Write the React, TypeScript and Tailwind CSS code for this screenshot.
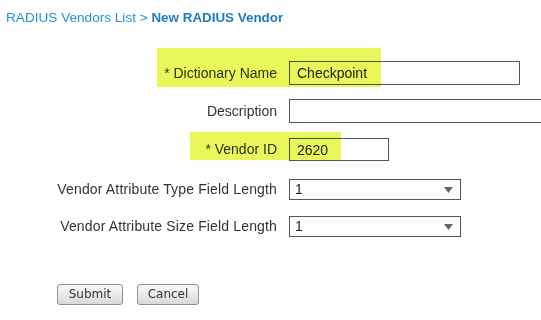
import React from "react";

const labelCls =
  "w-[277px] shrink-0 text-right text-[14px] text-[#333] pr-0";
const inputCls =
  "h-full border border-[#4b5b63] bg-white px-[7px] text-[14px] text-[#222] outline-none";

function Select() {
  return (
    <div className="relative h-[21px] w-[172px] border border-[#4b5b63] bg-white">
      <span className="absolute left-[5px] top-[1px] text-[14px] leading-[17px] text-[#222]">1</span>
      <svg
        className="absolute right-[7px] top-[7px]"
        width="9"
        height="6"
        viewBox="0 0 9 6"
      >
        <path d="M0 0 H9 L4.5 6 Z" fill="#666" />
      </svg>
    </div>
  );
}

function Button({ label, w }: { label: string; w: string }) {
  return (
    <button
      className={`${w} h-[21px] rounded-[3px] border border-[#8f8f8f] bg-gradient-to-b from-[#fbfbfb] to-[#d9d9d9] text-[12px] leading-[17px] text-[#333]`}
      style={{ fontFamily: '"DejaVu Sans", sans-serif' }}
    >
      {label}
    </button>
  );
}

export default function App() {
  return (
    <div
      className="relative h-[320px] w-[541px] overflow-hidden bg-white"
      style={{ fontFamily: '"Liberation Sans", Arial, sans-serif' }}
    >
      <div className="pl-[6px] pt-[9px] leading-[16px] whitespace-nowrap">
        <span className="text-[13.6px] text-[#2b8fd6]">RADIUS Vendors List &gt; </span>
        <span className="text-[13.4px] font-bold text-[#1a7dc4]">New RADIUS Vendor</span>
      </div>

      <div className="mt-[35px] flex flex-col">
        <div className="flex h-[24px] items-center gap-[12px]">
          <div className={labelCls}>* Dictionary Name</div>
          <input className={`${inputCls} w-[231px]`} defaultValue="Checkpoint" />
        </div>
        <div className="mt-[14px] flex h-[24px] items-center gap-[12px]">
          <div className={labelCls}>Description</div>
          <input className={`${inputCls} w-[280px] shrink-0`} defaultValue="" />
        </div>
        <div className="mt-[15px] flex h-[23px] items-center gap-[12px]">
          <div className={labelCls}>* Vendor ID</div>
          <input className={`${inputCls} w-[100px]`} defaultValue="2620" />
        </div>
        <div className="mt-[18px] flex h-[21px] items-center gap-[12px]">
          <div className={`${labelCls} tracking-[0.15px]`}>Vendor Attribute Type Field Length</div>
          <Select />
        </div>
        <div className="mt-[16px] flex h-[21px] items-center gap-[12px]">
          <div className={`${labelCls} tracking-[0.15px]`}>Vendor Attribute Size Field Length</div>
          <Select />
        </div>
        <div className="mt-[47px] flex gap-[14px] pl-[57px]">
          <Button label="Submit" w="w-[66px]" />
          <Button label="Cancel" w="w-[62px]" />
        </div>
      </div>

      <div className="pointer-events-none absolute left-[157px] top-[48px] h-[39px] w-[224px] bg-[#eaf75a] mix-blend-multiply" />
      <div className="pointer-events-none absolute left-[190px] top-[132px] h-[28px] w-[151px] bg-[#eaf75a] mix-blend-multiply" />
    </div>
  );
}
